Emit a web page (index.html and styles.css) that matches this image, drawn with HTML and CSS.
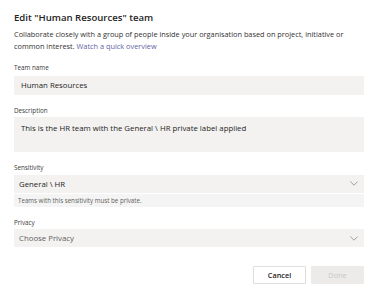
FILE: index.html
```html
<!DOCTYPE html>
<html>
<head>
<meta charset="utf-8">
<link rel="stylesheet" href="styles.css">
</head>
<body>
<div class="dialog">
  <h1 class="title">Edit "Human Resources" team</h1>
  <div class="intro">
    <div class="intro-line">Collaborate closely with a group of people inside your organisation based on project, initiative or</div>
    <div class="intro-line">common interest. <a class="link" href="#">Watch a quick overview</a></div>
  </div>

  <div class="field">
    <div class="label">Team name</div>
    <div class="box input">Human Resources</div>
  </div>

  <div class="field">
    <div class="label">Description</div>
    <div class="box textarea">This is the HR team with the General \ HR private label applied</div>
  </div>

  <div class="field">
    <div class="label">Sensitivity</div>
    <div class="box select">
      <span>General \ HR</span>
      <svg class="chev" width="8" height="5" viewBox="0 0 8 5"><path d="M0.3 0.5 L4 4.2 L7.7 0.5" fill="none" stroke="#8a8886" stroke-width="0.8"/></svg>
    </div>
    <div class="hint">Teams with this sensitivity must be private.</div>
  </div>

  <div class="field">
    <div class="label">Privacy</div>
    <div class="box select placeholder">
      <span>Choose Privacy</span>
      <svg class="chev" width="8" height="5" viewBox="0 0 8 5"><path d="M0.3 0.5 L4 4.2 L7.7 0.5" fill="none" stroke="#8a8886" stroke-width="0.8"/></svg>
    </div>
  </div>

  <div class="actions">
    <button class="btn cancel">Cancel</button>
    <button class="btn done">Done</button>
  </div>
</div>
</body>
</html>
```

FILE: styles.css
```css
html, body {
  margin: 0;
  padding: 0;
  background: #ffffff;
}
body {
  font-family: "Open Sans", "Noto Sans", sans-serif;
  color: #252423;
}
.dialog {
  padding: 11px 13px 0 14px;
  display: flex;
  flex-direction: column;
}
.title {
  margin: 0;
  font-size: 9.6px;
  line-height: 14px;
  font-weight: 600;
  color: #252423;
}
.intro {
  margin: 4px 0 0;
  font-size: 7.35px;
  line-height: 11.7px;
  color: #323130;
}
.intro-line {
  white-space: nowrap;
}
.link {
  color: #6264a7;
  text-decoration: none;
}
.field {
  margin-top: 11px;
  display: flex;
  flex-direction: column;
}
.label {
  font-size: 6.3px;
  line-height: 9px;
  color: #3b3a39;
  margin-bottom: 2.5px;
}
.box {
  background: #f3f2f1;
  color: #252423;
  font-size: 7.8px;
  box-sizing: border-box;
  padding: 0 7px;
}
.input {
  height: 19px;
  line-height: 19px;
  margin-top: 1px;
}
.textarea {
  height: 35px;
  padding-top: 6px;
  line-height: 11px;
}
.select {
  height: 18px;
  display: flex;
  align-items: center;
  justify-content: space-between;
  padding-right: 6px;
  padding-left: 5px;
}
.placeholder {
  color: #605e5c;
}
.chev {
  display: block;
}
.hint {
  margin-top: 1px;
  height: 13px;
  line-height: 13px;
  background: #f5f4f4;
  font-size: 6.2px;
  color: #605e5c;
  padding: 0 4px;
}
.actions {
  margin-top: 19px;
  display: flex;
  justify-content: flex-end;
  gap: 5px;
}
.btn {
  width: 53px;
  height: 18px;
  box-sizing: border-box;
  font-family: "Open Sans", "Noto Sans", sans-serif;
  font-size: 7.3px;
  font-weight: 600;
  padding: 0;
  border-radius: 1px;
}
.cancel {
  background: #ffffff;
  border: 1px solid #e1dfdd;
  color: #252423;
  box-shadow: 0 1px 1px rgba(0,0,0,0.08);
}
.done {
  background: #edebe9;
  border: 1px solid #edebe9;
  color: #c8c6c4;
  font-weight: 400;
}
```
